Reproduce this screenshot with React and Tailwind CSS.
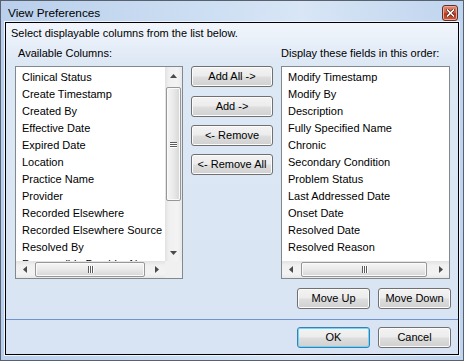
import React from "react";

const leftItems = [
  "Clinical Status",
  "Create Timestamp",
  "Created By",
  "Effective Date",
  "Expired Date",
  "Location",
  "Practice Name",
  "Provider",
  "Recorded Elsewhere",
  "Recorded Elsewhere Source",
  "Resolved By",
  "Responsible Provider Name",
];

const rightItems = [
  "Modify Timestamp",
  "Modify By",
  "Description",
  "Fully Specified Name",
  "Chronic",
  "Secondary Condition",
  "Problem Status",
  "Last Addressed Date",
  "Onset Date",
  "Resolved Date",
  "Resolved Reason",
];

function Arrow({ dir }) {
  const pts = {
    up: "0,4 3.5,0 7,4",
    down: "0,0 7,0 3.5,4",
    left: "4,0 4,7 0,3.5",
    right: "0,0 4,3.5 0,7",
  }[dir];
  const vertical = dir === "up" || dir === "down";
  return (
    <svg width={vertical ? 7 : 4} height={vertical ? 4 : 7} viewBox={vertical ? "0 0 7 4" : "0 0 4 7"}>
      <polygon points={pts} fill="#4a4a4a" />
    </svg>
  );
}

function WinButton({ children, w = "w-[73px]", primary = false, className = "" }) {
  return (
    <div
      className={`${w} h-[21px] shrink-0 flex items-center justify-center rounded-[3px] border ${
        primary
          ? "border-[#3c7fb1] shadow-[inset_0_0_0_1px_#6fd6fb]"
          : "border-[#707070] shadow-[inset_0_0_0_1px_#fbfbfb]"
      } bg-[linear-gradient(to_bottom,#f3f3f3_0%,#ececec_48%,#dedede_52%,#d0d0d0_100%)] text-[11px] leading-[13px] text-black ${className}`}
    >
      {children}
    </div>
  );
}

function VScroll() {
  return (
    <div className="w-[17px] shrink-0 flex flex-col bg-[linear-gradient(to_right,#e2e2e2,#f0f0f0_25%,#f3f3f3_75%,#e8e8e8)]">
      <div className="h-[17px] flex items-center justify-center">
        <Arrow dir="up" />
      </div>
      <div className="flex-1 flex flex-col">
        <div className="mt-[3px] mx-[1px] h-[114px] rounded-[2px] border border-[#979797] bg-[linear-gradient(to_right,#f6f6f6,#e9e9e9_50%,#d6d6d6)] shadow-[inset_0_0_0_1px_#fafafa] flex flex-col items-center justify-center gap-[1px]">
          <div className="w-[7px] h-[1px] bg-[#5c5c5c] shadow-[0_1px_0_#ffffff]" />
          <div className="w-[7px] h-[1px] bg-[#5c5c5c] shadow-[0_1px_0_#ffffff]" />
          <div className="w-[7px] h-[1px] bg-[#5c5c5c] shadow-[0_1px_0_#ffffff]" />
        </div>
      </div>
      <div className="h-[17px] flex items-center justify-center">
        <Arrow dir="down" />
      </div>
    </div>
  );
}

function HScroll({ thumbW, corner }) {
  return (
    <div className="h-[17px] shrink-0 flex">
      <div className="flex-1 flex bg-[linear-gradient(to_bottom,#e2e2e2,#f0f0f0_25%,#f3f3f3_75%,#e8e8e8)]">
        <div className="w-[17px] shrink-0 flex items-center justify-center">
          <Arrow dir="left" />
        </div>
        <div
          className={`${thumbW} ml-[2px] my-[1px] shrink-0 rounded-[2px] border border-[#979797] bg-[linear-gradient(to_bottom,#f6f6f6,#e9e9e9_50%,#d6d6d6)] shadow-[inset_0_0_0_1px_#fafafa] flex items-center justify-center gap-[1px]`}
        >
          <div className="w-[1px] h-[7px] bg-[#5c5c5c] shadow-[1px_0_0_#ffffff]" />
          <div className="w-[1px] h-[7px] bg-[#5c5c5c] shadow-[1px_0_0_#ffffff]" />
          <div className="w-[1px] h-[7px] bg-[#5c5c5c] shadow-[1px_0_0_#ffffff]" />
        </div>
        <div className="flex-1" />
        <div className="w-[17px] shrink-0 flex items-center justify-center">
          <Arrow dir="right" />
        </div>
      </div>
      {corner && <div className="w-[17px] shrink-0 bg-[#f0f0f0]" />}
    </div>
  );
}

function ListBox({ items, w, withV, thumbW }) {
  return (
    <div className={`${w} h-[213px] shrink-0 border border-[#828790] bg-white flex flex-col`}>
      <div className="flex-1 flex min-h-0">
        <div className="flex-1 overflow-hidden pt-[2px] pl-[6px]">
          {items.map((t) => (
            <div key={t} className="text-[11px] leading-[17px] whitespace-nowrap text-black">
              {t}
            </div>
          ))}
        </div>
        {withV && <VScroll />}
      </div>
      <HScroll thumbW={thumbW} corner={withV} />
    </div>
  );
}

export default function App() {
  return (
    <div className="w-[464px] h-[361px] border border-[#58616d] bg-[linear-gradient(to_right,#b9cfeb,#cddff3_45%,#d8e6f6_65%,#bfd4ee)] flex flex-col px-[4px] pb-[5px] font-['Liberation_Sans',Arial,sans-serif] text-black select-none">
      {/* Title bar */}
      <div className="h-[21px] shrink-0 flex items-start justify-between">
        <div className="mt-[5px] pl-[3px] text-[11.8px] leading-[15px] text-black">View Preferences</div>
        <div className="mt-[4px] mr-[1px] w-[16px] h-[16px] rounded-[3px] border border-[#5e3029] bg-[linear-gradient(to_bottom,#e58a72,#d4603f_45%,#b8341c_55%,#cc5a38)] shadow-[inset_0_0_0_1px_#eeaa98] flex items-center justify-center">
          <svg width="9" height="8" viewBox="0 0 9 8">
            <path d="M1.5 1 L7.5 7 M7.5 1 L1.5 7" stroke="#4e2019" strokeWidth="3" strokeLinecap="square" />
            <path d="M1.5 1 L7.5 7 M7.5 1 L1.5 7" stroke="#ffffff" strokeWidth="1.6" strokeLinecap="square" />
          </svg>
        </div>
      </div>

      {/* Client area */}
      <div className="flex-1 border border-black shadow-[0_0_0_1px_#eef4fb] bg-[linear-gradient(to_bottom,#f2f6fc,#dde8f5_40px,#d8e4f3)] flex flex-col">
        <div className="flex-1 flex flex-col">
          <div className="pt-[4px] pl-[5px] text-[11px] leading-[13px]">
            Select displayable columns from the list below.
          </div>
          <div className="mt-[7px] flex text-[11px] leading-[13px]">
            <div className="w-[275px] shrink-0 pl-[12px]">Available Columns:</div>
            <div>Display these fields in this order:</div>
          </div>
          <div className="mt-[6px] pl-[9px] flex">
            <ListBox items={leftItems} w="w-[168px]" withV thumbW="w-[110px]" />
            <div className="ml-[8px] w-[82px] shrink-0 flex flex-col">
              <WinButton w="w-[82px]">Add All -&gt;</WinButton>
              <WinButton w="w-[82px]" className="mt-[9px]">Add -&gt;</WinButton>
              <WinButton w="w-[82px]" className="mt-[8px]">&lt;- Remove</WinButton>
              <WinButton w="w-[82px]" className="mt-[8px]">&lt;- Remove All</WinButton>
            </div>
            <div className="ml-[8px]">
              <ListBox items={rightItems} w="w-[169px]" thumbW="w-[126px]" />
            </div>
          </div>
          <div className="mt-[9px] flex justify-end gap-[8px] pr-[7px]">
            <WinButton>Move Up</WinButton>
            <WinButton>Move Down</WinButton>
          </div>
        </div>
        <div className="h-[1px] shrink-0 bg-[#6f93cc]" />
        <div className="h-[34px] shrink-0 flex justify-end items-start gap-[8px] pt-[7px] pr-[7px]">
          <WinButton primary>OK</WinButton>
          <WinButton>Cancel</WinButton>
        </div>
      </div>
    </div>
  );
}
